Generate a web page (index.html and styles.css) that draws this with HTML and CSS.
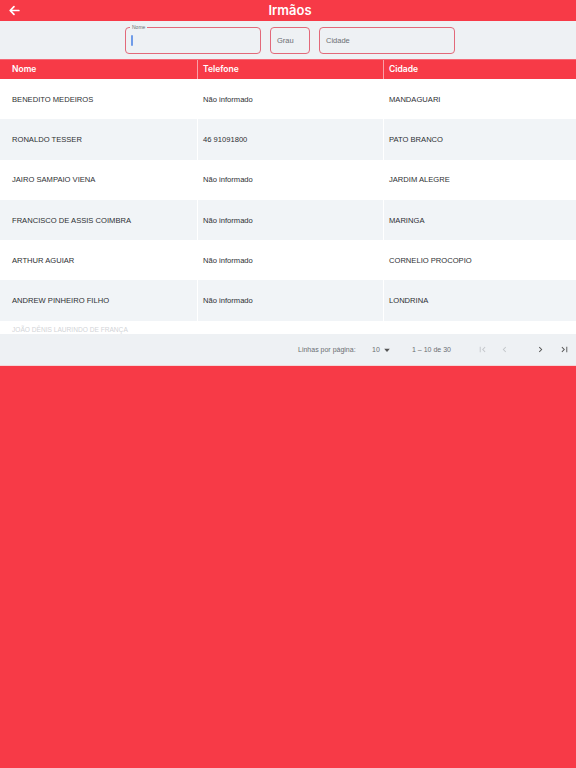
FILE: index.html
```html
<!DOCTYPE html>
<html lang="pt">
<head>
<meta charset="utf-8">
<title>Irmãos</title>
<link rel="stylesheet" href="styles.css">
</head>
<body>
<div class="app">
  <header class="topbar">
    <button class="back" aria-label="Voltar">
      <svg width="13" height="13" viewBox="0 0 24 24"><path d="M20 12H5M11 5l-7 7 7 7" fill="none" stroke="#fff" stroke-width="3.2" stroke-linecap="round" stroke-linejoin="round"/></svg>
    </button>
    <h1 class="title">Irmãos</h1>
  </header>

  <div class="filters">
    <label class="field field-wide">
      <span class="float-label">Nome</span>
      <span class="caret"></span>
    </label>
    <label class="field field-narrow"><span class="ph">Grau</span></label>
    <label class="field field-wide"><span class="ph">Cidade</span></label>
  </div>

  <div class="table">
    <div class="thead">
      <div class="cell">Nome</div>
      <div class="cell">Telefone</div>
      <div class="cell">Cidade</div>
    </div>
    <div class="tbody">
      <div class="row"><div class="cell">BENEDITO MEDEIROS</div><div class="cell">Não informado</div><div class="cell">MANDAGUARI</div></div>
      <div class="row alt"><div class="cell">RONALDO TESSER</div><div class="cell">46 91091800</div><div class="cell">PATO BRANCO</div></div>
      <div class="row"><div class="cell">JAIRO SAMPAIO VIENA</div><div class="cell">Não informado</div><div class="cell">JARDIM ALEGRE</div></div>
      <div class="row alt"><div class="cell">FRANCISCO DE ASSIS COIMBRA</div><div class="cell">Não informado</div><div class="cell">MARINGA</div></div>
      <div class="row"><div class="cell">ARTHUR AGUIAR</div><div class="cell">Não informado</div><div class="cell">CORNELIO PROCOPIO</div></div>
      <div class="row alt"><div class="cell">ANDREW PINHEIRO FILHO</div><div class="cell">Não informado</div><div class="cell">LONDRINA</div></div>
      <div class="row peek"><div class="cell">JOÃO DÊNIS LAURINDO DE FRANÇA</div><div class="cell"></div><div class="cell"></div></div>
    </div>
    <div class="paginator">
      <span class="pg-label">Linhas por página:</span>
      <span class="pg-size">10
        <svg width="8" height="8" viewBox="0 0 10 10"><path d="M1.5 3.5h7L5 7.5z" fill="#555"/></svg>
      </span>
      <span class="pg-range">1 – 10 de 30</span>
      <span class="pg-btn b1">
        <svg width="11" height="11" viewBox="0 0 24 24"><path d="M18.4 16.6L13.8 12l4.6-4.6L17 6l-6 6 6 6zM6 6h2v12H6z" fill="#c4c7cb"/></svg>
      </span>
      <span class="pg-btn b2">
        <svg width="11" height="11" viewBox="0 0 24 24"><path d="M15.4 7.4L14 6l-6 6 6 6 1.4-1.4L10.8 12z" fill="#c4c7cb"/></svg>
      </span>
      <span class="pg-btn b3">
        <svg width="11" height="11" viewBox="0 0 24 24"><path d="M10 6L8.6 7.4 13.2 12l-4.6 4.6L10 18l6-6z" fill="#555"/></svg>
      </span>
      <span class="pg-btn b4">
        <svg width="11" height="11" viewBox="0 0 24 24"><path d="M5.6 7.4L10.2 12l-4.6 4.6L7 18l6-6-6-6zM16 6h2v12h-2z" fill="#555"/></svg>
      </span>
    </div>
  </div>
</div>
</body>
</html>
```

FILE: styles.css
```css
* { box-sizing: border-box; }
html, body {
  margin: 0;
  padding: 0;
  height: 100%;
  background: #f73a47;
  font-family: "Liberation Sans", Arial, sans-serif;
}
.app {
  display: flex;
  flex-direction: column;
}
.topbar {
  height: 21px;
  background: #f73a47;
  display: flex;
  align-items: center;
  justify-content: center;
  position: relative;
}
.back {
  position: absolute;
  left: 7px;
  top: 3px;
  border: 0;
  background: none;
  padding: 0;
  width: 14px;
  height: 14px;
  display: flex;
  align-items: center;
  justify-content: center;
}
.title {
  margin: 0;
  color: #fff;
  font-family: Inter, "Liberation Sans", sans-serif;
  font-size: 13px;
  font-weight: 600;
  line-height: 21px;
  padding-left: 4px;
}
.filters {
  height: 38px;
  background: #eef1f4;
  display: flex;
  justify-content: center;
  align-items: flex-start;
  gap: 9px;
  padding-top: 6px;
  padding-left: 4px;
}
.field {
  height: 27px;
  border: 1.5px solid #e2697a;
  border-radius: 4px;
  position: relative;
  display: flex;
  align-items: center;
  padding-left: 6px;
}
.field-wide { width: 136px; }
.field-narrow { width: 40px; }
.float-label {
  position: absolute;
  left: 4px;
  top: -4px;
  font-size: 5px;
  line-height: 6px;
  color: #6b6e73;
  background: #eef1f4;
  padding: 0 2px;
}
.caret {
  width: 1.5px;
  height: 11px;
  background: #6f9be8;
  border-radius: 1px;
  margin-left: -1px;
}
.ph {
  font-size: 7.5px;
  color: #6b6e73;
}
.table {
  display: flex;
  flex-direction: column;
  border-top: 1px solid #f56775;
}
.thead {
  height: 19px;
  background: #f73a47;
  display: grid;
  grid-template-columns: 197px 186px 1fr;
}
.thead .cell {
  color: #fff;
  font-family: Inter, "Liberation Sans", sans-serif;
  font-size: 8.5px;
  font-weight: 600;
  line-height: 19px;
  padding-left: 12px;
  border-left: 1px solid #f9a0a8;
}
.thead .cell:first-child { border-left: 0; }
.thead .cell:nth-child(n+2) { padding-left: 5px; }
.tbody {
  height: 255px;
  overflow: hidden;
  background: #fff;
}
.row {
  height: 40.3px;
  display: grid;
  grid-template-columns: 197px 186px 1fr;
  align-items: center;
  background: #fff;
}
.row.alt { background: #f1f4f7; }
.row .cell {
  font-size: 7.6px;
  color: #2d2f33;
  padding-left: 12px;
  height: 100%;
  display: flex;
  align-items: center;
  border-left: 1px solid #ffffff;
}
.row .cell:first-child { border-left: 0; }
.row .cell:nth-child(n+2) { padding-left: 5px; }
.row.peek { align-items: start; }
.row.peek .cell {
  align-items: flex-start;
  padding-top: 5px;
  font-size: 6.6px;
  line-height: 8px;
  color: #d2d4d7;
}
.paginator {
  height: 32px;
  background: #eef1f4;
  border-bottom: 1px solid #f4d6d9;
  display: flex;
  align-items: center;
  font-size: 7px;
  color: #6b6e73;
  padding-left: 298px;
}
.pg-label { width: 74px; }
.pg-size {
  display: flex;
  align-items: center;
  gap: 3px;
  width: 40px;
}
.pg-range { width: 65px; }
.pg-btn {
  display: flex;
  justify-content: flex-start;
  align-items: center;
}
.b1 { width: 22px; }
.b2 { width: 36px; }
.b3 { width: 24px; }
.b4 { width: 12px; }
```
